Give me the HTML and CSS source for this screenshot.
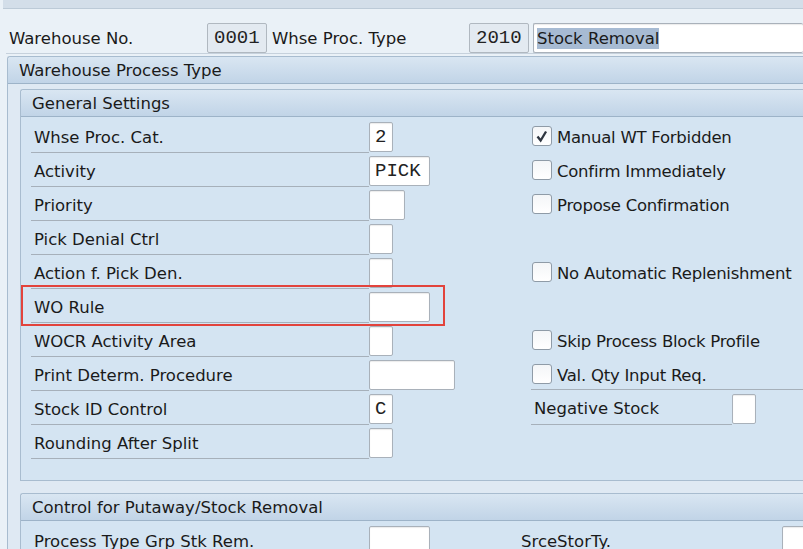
FILE: index.html
```html
<!DOCTYPE html>
<html lang="en">
<head>
  <meta charset="UTF-8" />
  <title>Warehouse Process Type</title>
  <link rel="stylesheet" href="styles.css">
</head>
<body>
  <div class="topbar"></div>

  <!-- Key fields -->
  <div class="header">
    <span class="hlabel wh-label">Warehouse No.</span>
    <span class="field ro mono w-key">0001</span>
    <span class="hlabel type-label">Whse Proc. Type</span>
    <span class="field ro mono w-key">2010</span>
    <span class="field desc"><span class="sel">Stock Removal</span></span>
  </div>

  <div class="panel outer">
    <div class="title">Warehouse Process Type</div>
    <div class="outer-body">

      <!-- General Settings -->
      <div class="panel group">
        <div class="title">General Settings</div>
        <div class="group-body">
          <div class="grid">
            <div class="cell"><span class="label">Whse Proc. Cat.</span><span class="field mono w1">2</span></div>
            <div class="cell"><span class="check on"><svg viewBox="0 0 20 20"><path d="M5 10.5 L8.5 15 L14.5 5"/></svg></span><span class="ctext">Manual WT Forbidden</span></div>

            <div class="cell"><span class="label">Activity</span><span class="field mono w4">PICK</span></div>
            <div class="cell"><span class="check"></span><span class="ctext">Confirm Immediately</span></div>

            <div class="cell"><span class="label">Priority</span><span class="field mono w2"></span></div>
            <div class="cell"><span class="check"></span><span class="ctext">Propose Confirmation</span></div>

            <div class="cell"><span class="label">Pick Denial Ctrl</span><span class="field mono w1"></span></div>
            <div class="cell"></div>

            <div class="cell"><span class="label">Action f. Pick Den.</span><span class="field mono w1"></span></div>
            <div class="cell"><span class="check"></span><span class="ctext">No Automatic Replenishment</span></div>

            <div class="cell marked"><span class="label">WO Rule</span><span class="field mono w4"></span></div>
            <div class="cell"></div>

            <div class="cell"><span class="label">WOCR Activity Area</span><span class="field mono w1"></span></div>
            <div class="cell"><span class="check"></span><span class="ctext">Skip Process Block Profile</span></div>

            <div class="cell"><span class="label">Print Determ. Procedure</span><span class="field mono w6"></span></div>
            <div class="cell"><span class="check"></span><span class="ctext">Val. Qty Input Req.</span></div>

            <div class="cell"><span class="label">Stock ID Control</span><span class="field mono w1">C</span></div>
            <div class="cell split"><span class="label short">Negative Stock</span><span class="field mono w1"></span></div>

            <div class="cell"><span class="label">Rounding After Split</span><span class="field mono w1"></span></div>
            <div class="cell"></div>
          </div>
        </div>
      </div>

      <!-- Control for Putaway/Stock Removal -->
      <div class="panel group">
        <div class="title">Control for Putaway/Stock Removal</div>
        <div class="group-body">
          <div class="grid narrow">
            <div class="cell"><span class="label">Process Type Grp Stk Rem.</span><span class="field mono w4"></span></div>
            <div class="cell"><span class="label plain">SrceStorTy.</span><span class="field mono w4"></span></div>
          </div>
        </div>
      </div>

    </div>
  </div>
</body>
</html>
```

FILE: styles.css
```css
body {
  margin: 0;
  font-family: "DejaVu Sans", Verdana, sans-serif;
  font-size: 16.5px;
  color: #1a1a1a;
  background: #eaf1f7;
  overflow: hidden;
  height: 549px;
}

.topbar {
  height: 8px;
  margin-left: 3px;
  background: #d3dee9;
  border-bottom: 1px solid #bccad7;
}

/* header with key fields */
.header {
  display: flex;
  align-items: flex-end;
  height: 31px;
  margin: 13px 0 0 6px;
  padding-left: 3px;
  border-bottom: 1px solid #c6d1dc;
}

.hlabel {
  align-self: center;
  padding-top: 2px;
}

.wh-label { width: 198px; }
.type-label { width: 197px; margin-left: 5px; }

.field {
  display: flex;
  align-items: center;
  box-sizing: border-box;
  height: 30px;
  background: #fff;
  border: 1px solid #a9b1ba;
  border-radius: 2px;
  box-shadow: inset 0 1px 1px rgba(0,0,0,0.08);
  flex-shrink: 0;
}

.mono {
  font-family: "Liberation Mono", "Courier New", monospace;
  font-size: 19px;
  padding-left: 5px;
  color: #222;
}

.field.ro {
  background: #e3eaf1;
  border-color: #b0b8c0;
  box-shadow: none;
}

.w-key { width: 60px; padding-left: 6px; }

.field.desc {
  flex: 1;
  margin-left: 4px;
  padding-left: 3px;
  border-right: none;
  font-size: 16.5px;
}

.sel {
  background: #a7bbd3;
  padding: 1px 0;
}

/* panels */
.panel {
  border: 1px solid #a8bccf;
  border-right: none;
  border-radius: 3px 0 0 0;
}

.title {
  height: 26px;
  display: flex;
  align-items: center;
  padding-left: 11px;
  background: linear-gradient(#d9e6f2, #c1d4e7);
  border-bottom: 1px solid #9db3c8;
  border-radius: 3px 0 0 0;
}

.outer {
  margin: 2px 0 0 7px;
  background: #dfe9f3;
  height: 520px;
}

.outer-body {
  padding: 5px 0 0 12px;
}

.group {
  margin-bottom: 12px;
}

.group-body {
  background: #d4e4f2;
  padding: 2px 0 21px 10px;
}

.grid {
  display: grid;
  grid-template-columns: 500px 1fr;
  grid-auto-rows: 34px;
}

.grid.narrow {
  grid-template-columns: 489px 1fr;
}

.cell {
  display: flex;
  align-items: flex-end;
  position: relative;
}

.label {
  box-sizing: border-box;
  width: 338px;
  height: 100%;
  display: flex;
  align-items: center;
  padding: 3px 0 0 3px;
  border-bottom: 1px solid #a6b0ba;
  flex-shrink: 0;
}

.label.short { width: 201px; }

.label.plain {
  width: 262px;
  border-bottom: none;
  padding-left: 1px;
}

.cell .field { margin-bottom: 1px; }

.w1 { width: 24px; }
.w2 { width: 36px; }
.w4 { width: 61px; }
.w6 { width: 86px; }

/* checkboxes */
.check {
  box-sizing: border-box;
  width: 20px;
  height: 20px;
  margin: 0 5px 7px 1px;
  background: linear-gradient(#f4f6f8, #fff);
  border: 1px solid #8f9ba7;
  border-radius: 3px;
  flex-shrink: 0;
}

.check svg {
  display: block;
  width: 18px;
  height: 18px;
}

.check svg path {
  fill: none;
  stroke: #2e3540;
  stroke-width: 2.6;
}

.ctext {
  align-self: center;
  padding-top: 3px;
  white-space: nowrap;
  letter-spacing: -0.25px;
}

.split {
  border-top: 1px solid #a6b0ba;
  margin-top: -2px;
}

/* highlight around WO Rule */
.marked::after {
  content: "";
  position: absolute;
  left: -10px;
  top: -4px;
  width: 420px;
  height: 37px;
  border: 2px solid #e2433c;
}
```
